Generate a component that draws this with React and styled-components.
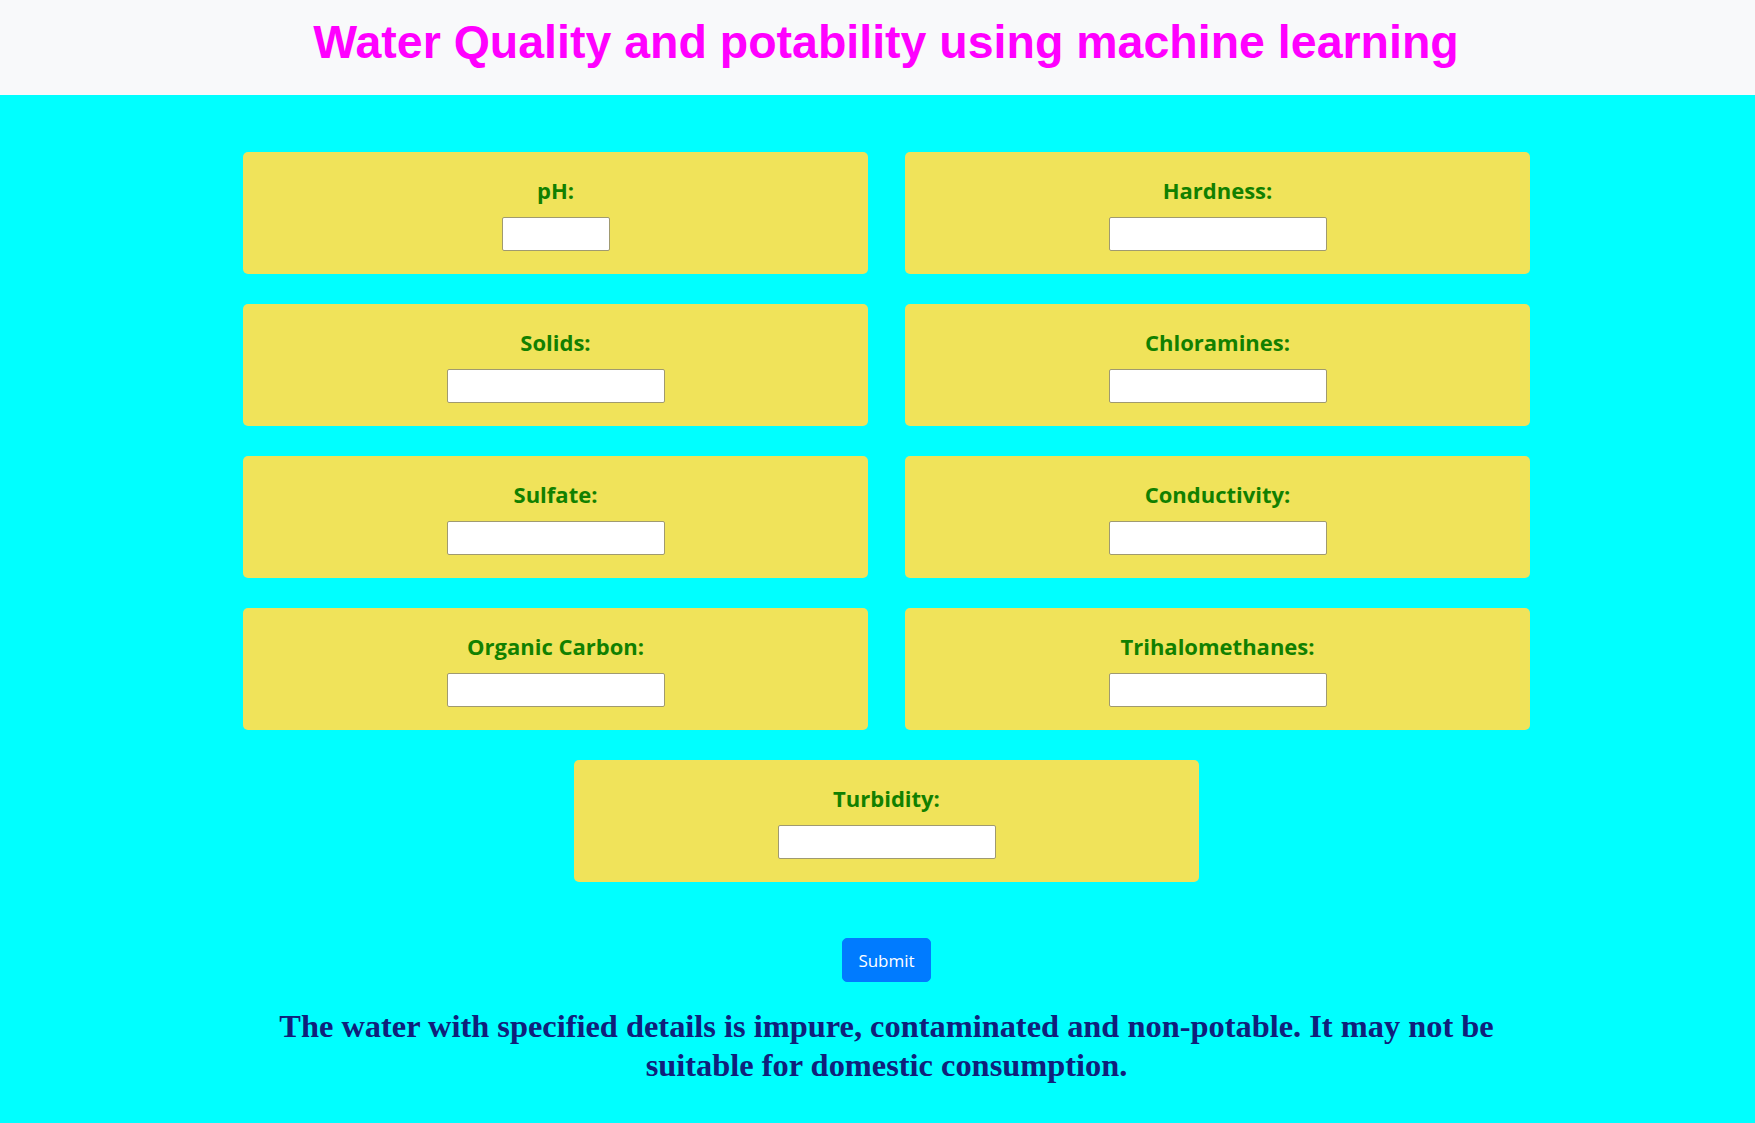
import React, { useState } from "react";
import styled, { createGlobalStyle } from "styled-components";

const fields = [
  { name: "ph", label: "pH:", narrow: true },
  { name: "hardness", label: "Hardness:" },
  { name: "solids", label: "Solids:" },
  { name: "chloramines", label: "Chloramines:" },
  { name: "sulfate", label: "Sulfate:" },
  { name: "conductivity", label: "Conductivity:" },
  { name: "organic_carbon", label: "Organic Carbon:" },
  { name: "trihalomethanes", label: "Trihalomethanes:" },
  { name: "turbidity", label: "Turbidity:" },
];

const App = () => {
  const [values, setValues] = useState({});

  const update = (name) => (e) =>
    setValues({ ...values, [name]: e.target.value });

  return (
    <>
      <GlobalStyle />
      <Header>
        <Title>Water Quality and potability using machine learning</Title>
      </Header>
      <Main>
        <Form onSubmit={(e) => e.preventDefault()}>
          <Grid>
            {fields.map((f) => (
              <Card key={f.name}>
                <Label htmlFor={f.name}>{f.label}</Label>
                <Input
                  id={f.name}
                  type="text"
                  $narrow={f.narrow}
                  value={values[f.name] || ""}
                  onChange={update(f.name)}
                />
              </Card>
            ))}
          </Grid>
          <SubmitButton type="submit">Submit</SubmitButton>
        </Form>
        <Result>
          The water with specified details is impure, contaminated and
          non-potable. It may not be suitable for domestic consumption.
        </Result>
      </Main>
    </>
  );
};

export default App;

const GlobalStyle = createGlobalStyle`
  html, body {
    margin: 0;
    padding: 0;
    background: #00ffff;
  }
  * {
    box-sizing: border-box;
  }
`;

const Header = styled.header`
  height: 95px;
  background: #f8f9fa;
  display: flex;
  align-items: center;
  justify-content: center;
  padding: 0 0 11px 17px;
`;

const Title = styled.h1`
  margin: 0;
  font-family: "Liberation Sans", Arial, sans-serif;
  font-weight: bold;
  font-size: 46.5px;
  color: #ff00ff;
  line-height: 1;
`;

const Main = styled.main`
  display: flex;
  flex-direction: column;
  align-items: center;
  padding: 57px 0 30px 18px;
`;

const Form = styled.form`
  display: flex;
  flex-direction: column;
  align-items: center;
`;

const Grid = styled.div`
  width: 1287px;
  display: flex;
  flex-wrap: wrap;
  justify-content: center;
  column-gap: 37px;
  row-gap: 30px;
`;

const Card = styled.div`
  width: 625px;
  height: 122px;
  background: #f0e35a;
  border-radius: 5px;
  display: flex;
  flex-direction: column;
  align-items: center;
  padding-top: 23px;
`;

const Label = styled.label`
  display: block;
  font-family: "Open Sans", "Noto Sans", sans-serif;
  font-weight: bold;
  font-size: 22px;
  line-height: 30px;
  color: #128000;
  margin-bottom: 12px;
`;

const Input = styled.input`
  width: ${(p) => (p.$narrow ? "108px" : "218px")};
  height: 34px;
  border: 1px solid #a09a70;
  border-radius: 2px;
  background: #fff;
  padding: 2px 6px;
  font-size: 16px;
  font-family: "Liberation Sans", Arial, sans-serif;
`;

const SubmitButton = styled.button`
  margin-top: 56px;
  height: 44px;
  padding: 0 15px;
  background: #007bff;
  color: #fff;
  border: 1px solid #007bff;
  border-radius: 5px;
  font-family: "Open Sans", "Noto Sans", sans-serif;
  font-size: 17px;
  cursor: pointer;
`;

const Result = styled.h2`
  width: 1287px;
  margin: 25px 0 0;
  text-align: center;
  font-family: "Liberation Serif", "Times New Roman", serif;
  font-weight: bold;
  font-size: 32.4px;
  line-height: 39px;
  color: #10207a;
`;
